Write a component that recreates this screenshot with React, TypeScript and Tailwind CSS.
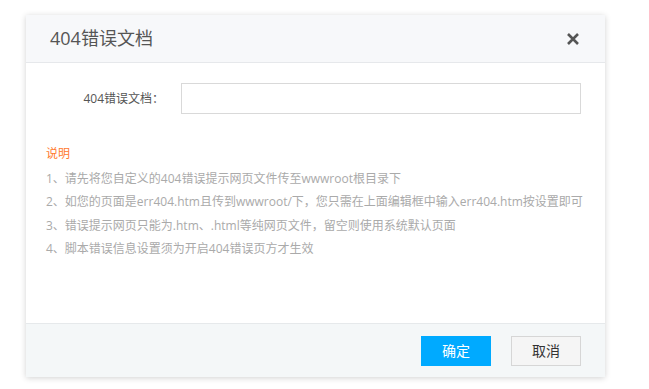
export default function App() {
  const notes = [
    '1、请先将您自定义的404错误提示网页文件传至wwwroot根目录下',
    '2、如您的页面是err404.htm且传到wwwroot/下，您只需在上面编辑框中输入err404.htm按设置即可',
    '3、错误提示网页只能为.htm、.html等纯网页文件，留空则使用系统默认页面',
    '4、脚本错误信息设置须为开启404错误页方才生效',
  ];

  return (
    <div
      className="w-[649px] h-[389px] bg-white pt-[15px] pl-[26px]"
      style={{ fontFamily: '"Open Sans", "Noto Sans CJK SC", sans-serif' }}
    >
      <div className="w-[579px] flex flex-col shadow-[0_1px_6px_rgba(0,0,0,0.18)] bg-white">
        {/* header */}
        <div className="h-[48px] flex items-center justify-between pl-[24px] pr-[25px] bg-[#f7f8fa] border-b border-[#e6e8eb]">
          <h1 className="text-[18px] text-[#555] font-normal">404错误文档</h1>
          <button className="w-[14px] h-[14px] flex items-center justify-center">
            <svg viewBox="0 0 14 14" className="w-[14px] h-[14px]">
              <path d="M2 2L12 12M12 2L2 12" stroke="#555" strokeWidth="2.6" strokeLinecap="butt" />
            </svg>
          </button>
        </div>

        {/* body */}
        <div className="h-[260px] pt-[20px] px-[20px]">
          <div className="flex items-center">
            <label className="w-[118px] text-right text-[12px] text-[#555]">404错误文档：</label>
            <input className="ml-[17px] w-[400px] h-[31px] border border-[#d9d9d9] outline-none px-2 text-[12px]" />
          </div>
          <div className="mt-[28px] text-[12px] leading-[23.5px]">
            <p className="text-[#ff7a2e] mb-[1px]">说明</p>
            {notes.map((n) => (
              <p key={n} className="text-[#aaa]">{n}</p>
            ))}
          </div>
        </div>

        {/* footer */}
        <div className="h-[54px] bg-[#f4f7f8] border-t border-[#e6e9eb] flex items-center justify-end gap-[20px] pr-[24px]">
          <button className="w-[70px] h-[30px] bg-[#00aaff] text-white text-[14px]">确定</button>
          <button className="w-[70px] h-[30px] bg-[#f5f5f5] border border-[#d6d6d6] text-[#333] text-[14px]">取消</button>
        </div>
      </div>
    </div>
  );
}
